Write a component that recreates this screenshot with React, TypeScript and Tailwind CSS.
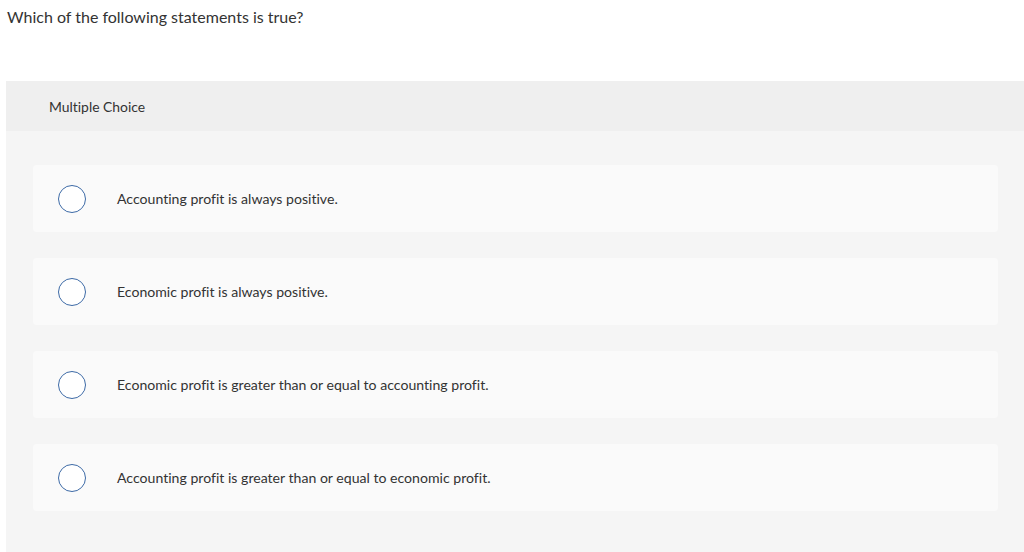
import React from "react";

const options = [
  "Accounting profit is always positive.",
  "Economic profit is always positive.",
  "Economic profit is greater than or equal to accounting profit.",
  "Accounting profit is greater than or equal to economic profit.",
];

export default function App() {
  return (
    <div className="w-[1024px] h-[552px] overflow-hidden bg-white text-[#333333] [font-variant-ligatures:none]" style={{ fontFamily: "Lato, 'Open Sans', sans-serif" }}>
      <div className="h-[81px] pl-[7px] pt-[7px]">
        <p className="text-[16px] leading-[20px]">Which of the following statements is true?</p>
      </div>
      <div className="ml-[6px] h-[471px] bg-[#f5f5f5]">
        <div className="h-[50px] bg-[#efefef] flex items-center pl-[43px] pt-[2px]">
          <span className="text-[13.9px]">Multiple Choice</span>
        </div>
        <div className="pt-[34px] pl-[27px] pr-[26px] flex flex-col gap-[26px]">
          {options.map((o) => (
            <div key={o} className="h-[67px] bg-[#fafafa] rounded-[4px] flex items-center">
              <div className="ml-[25px] w-[28px] h-[28px] rounded-full border border-[#3d6aa6] bg-white shrink-0" />
              <span className="ml-[31px] text-[14.1px]">{o}</span>
            </div>
          ))}
        </div>
      </div>
    </div>
  );
}
